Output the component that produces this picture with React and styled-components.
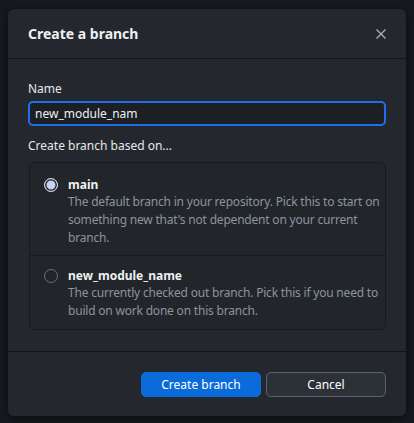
import React, { useState } from "react";
import styled, { createGlobalStyle } from "styled-components";

const Global = createGlobalStyle`
  html, body { margin: 0; padding: 0; background: #16191d; }
  body { font-family: "Noto Sans", "Open Sans", sans-serif; color: #e6e8eb; }
  * { box-sizing: border-box; }
`;

const Page = styled.div`
  width: 414px;
  height: 423px;
  padding: 9px 8px 0 8px;
  background: #16191d;
`;

const Dialog = styled.div`
  width: 398px;
  height: 407px;
  background: #24282e;
  border-radius: 6px;
  display: flex;
  flex-direction: column;
  box-shadow: 0 2px 8px rgba(0, 0, 0, 0.5);
`;

const Header = styled.div`
  height: 50px;
  display: flex;
  align-items: center;
  justify-content: space-between;
  padding: 0 20px 0 20px;
  border-bottom: 1px solid #131518;
`;

const Title = styled.h1`
  margin: 0;
  font-size: 14px;
  font-weight: 700;
  color: #eef0f2;
`;

const Close = styled.button`
  background: none;
  border: 0;
  padding: 0;
  width: 14px;
  height: 14px;
  color: #a9adb3;
  display: flex;
  align-items: center;
  justify-content: center;
  margin-right: -2px;
`;

const Body = styled.div`
  flex: 1;
  padding: 22px 20px 0 20px;
  border-bottom: 1px solid #131518;
`;

const Label = styled.div`
  font-size: 12px;
  color: #e6e8eb;
  line-height: 16px;
  margin-bottom: 4px;
`;

const Input = styled.input`
  display: block;
  width: 358px;
  height: 25px;
  background: #1c1f24;
  border: 2px solid #1f6feb;
  border-radius: 5px;
  color: #eef0f2;
  font-family: inherit;
  font-size: 12px;
  padding: 0 5px;
  outline: none;
  margin-bottom: 12px;
`;

const Options = styled.div`
  margin-top: 8px;
  width: 357px;
  margin-left: 1px;
  border: 1px solid #17191d;
  border-radius: 6px;
  background: #22262b;
`;

const Option = styled.label`
  display: flex;
  gap: 10px;
  padding: ${(p) => (p.first ? "14px 4px 8px 14px" : "12px 4px 9px 14px")};
  border-top: ${(p) => (p.first ? "none" : "1px solid #17191d")};
  cursor: pointer;
`;

const Radio = styled.span`
  flex: none;
  width: 14px;
  height: 14px;
  margin-top: 1px;
  border-radius: 50%;
  border: 1.5px solid ${(p) => (p.checked ? "#cfd6e6" : "#6b7078")};
  background: ${(p) => (p.checked ? "#c5d3f5" : "transparent")};
  box-shadow: ${(p) => (p.checked ? "inset 0 0 0 1.5px #22262b" : "none")};
`;

const Text = styled.div`
  display: flex;
  flex-direction: column;
`;

const Name = styled.div`
  font-size: 12px;
  font-weight: 700;
  line-height: 16px;
  color: #eef0f2;
`;

const Desc = styled.div`
  font-size: 12px;
  letter-spacing: -0.2px;
  line-height: 18px;
  color: #8d939b;
`;

const Footer = styled.div`
  height: 64px;
  display: flex;
  justify-content: flex-end;
  align-items: center;
  gap: 5px;
  padding: 0 20px 0 0;
`;

const Button = styled.button`
  width: 120px;
  height: 25px;
  border-radius: 5px;
  font-family: inherit;
  font-size: 12px;
  color: #ffffff;
  background: ${(p) => (p.primary ? "#0b6bdb" : "#2c3137")};
  border: 1px solid ${(p) => (p.primary ? "#0b6bdb" : "#5d636b")};
`;

const branches = [
  {
    name: "main",
    desc: "The default branch in your repository. Pick this to start on something new that's not dependent on your current branch.",
  },
  {
    name: "new_module_name",
    desc: "The currently checked out branch. Pick this if you need to build on work done on this branch.",
  },
];

export default function App() {
  const [name, setName] = useState("new_module_nam");
  const [base, setBase] = useState("main");
  return (
    <Page>
      <Global />
      <Dialog>
        <Header>
          <Title>Create a branch</Title>
          <Close aria-label="Close">
            <svg width="12" height="12" viewBox="0 0 12 12">
              <path d="M1.5 1.5 L10.5 10.5 M10.5 1.5 L1.5 10.5" stroke="currentColor" strokeWidth="1.4" />
            </svg>
          </Close>
        </Header>
        <Body>
          <Label>Name</Label>
          <Input value={name} onChange={(e) => setName(e.target.value)} />
          <Label>Create branch based on...</Label>
          <Options>
            {branches.map((b, i) => (
              <Option key={b.name} first={i === 0} onClick={() => setBase(b.name)}>
                <Radio checked={base === b.name} />
                <Text>
                  <Name>{b.name}</Name>
                  <Desc>{b.desc}</Desc>
                </Text>
              </Option>
            ))}
          </Options>
        </Body>
        <Footer>
          <Button primary>Create branch</Button>
          <Button>Cancel</Button>
        </Footer>
      </Dialog>
    </Page>
  );
}
